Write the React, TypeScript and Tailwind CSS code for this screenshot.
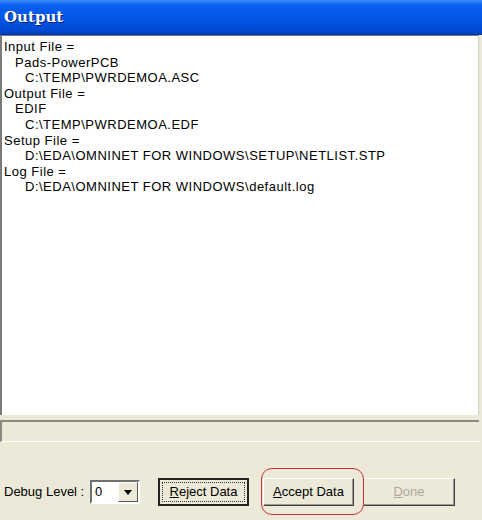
import React from "react";

const lines: { text: string; indent: number }[] = [
  { text: "Input File =", indent: 0 },
  { text: "Pads-PowerPCB", indent: 1 },
  { text: "C:\\TEMP\\PWRDEMOA.ASC", indent: 2 },
  { text: "Output File =", indent: 0 },
  { text: "EDIF", indent: 1 },
  { text: "C:\\TEMP\\PWRDEMOA.EDF", indent: 2 },
  { text: "Setup File =", indent: 0 },
  { text: "D:\\EDA\\OMNINET FOR WINDOWS\\SETUP\\NETLIST.STP", indent: 2 },
  { text: "Log File =", indent: 0 },
  { text: "D:\\EDA\\OMNINET FOR WINDOWS\\default.log", indent: 2 },
];

const indentClass = ["pl-[2px]", "pl-[13px]", "pl-[23px]"];

const raised =
  "bg-[#ece9d8] border border-t-white border-l-white border-b-[#404040] border-r-[#404040] shadow-[inset_-1px_-1px_0_#9a9a90]";

export default function App() {
  return (
    <div
      className="w-[482px] h-[520px] bg-[#ece9d8] flex flex-col overflow-hidden"
      style={{ fontFamily: '"Liberation Sans", Arial, sans-serif' }}
    >
      {/* Title bar */}
      <div className="shrink-0 h-[35px] flex items-center pl-[4px] bg-[linear-gradient(to_bottom,#3a8cf8_0%,#0a5ff0_15%,#0055e5_55%,#0048cf_90%,#003aa8_100%)]">
        <span
          className="text-white font-bold text-[15px] [text-shadow:1px_1px_0_#0a1f70]"
          style={{ fontFamily: '"DejaVu Serif", "Liberation Serif", serif' }}
        >
          Output
        </span>
      </div>

      {/* Output text area */}
      <div className="shrink-0 h-[380px] bg-white border-l-2 border-t border-[#7a7a7a] border-r border-r-[#d4d0c8] mr-[3px] pt-[3px] text-[13px] leading-[15.6px] tracking-[0.5px] text-black">
        {lines.map((l, i) => (
          <div key={i} className={indentClass[l.indent]}>
            {l.text}
          </div>
        ))}
      </div>

      {/* Status panel */}
      <div className="shrink-0 mt-[5px] h-[22px] border-t-2 border-l-2 border-[#8a8a80] border-b border-b-white mr-[3px]" />

      {/* Bottom controls */}
      <div className="shrink-0 flex items-center h-[28px] mt-[36px] text-[13px] text-black">
        <span className="pl-[4px] w-[90px]">Debug Level :</span>
        <div className="w-[50px] h-[24px] bg-white border-2 border-t-[#6f6f6f] border-l-[#6f6f6f] border-b-white border-r-white flex items-center">
          <span className="pl-[3px] flex-1">0</span>
          <div className="w-[20px] h-[20px] bg-[#ece9d8] border border-t-white border-l-white border-b-[#555] border-r-[#555] flex items-center justify-center">
            <svg width="8" height="5" viewBox="0 0 8 5">
              <polygon points="0,0 8,0 4,5" fill="#000" />
            </svg>
          </div>
        </div>

        <button className="ml-[18px] w-[91px] h-[28px] border-2 border-[#222] bg-[#ece9d8] flex items-center justify-center p-[2px]">
          <span className="w-full h-full border border-dotted border-[#333] flex items-center justify-center">
            <span>
              <u>R</u>eject Data
            </span>
          </span>
        </button>

        <div className="relative ml-[14px]">
          <button className={`w-[91px] h-[28px] ${raised}`}>
            <u>A</u>ccept Data
          </button>
          <div className="absolute left-[-2px] top-[-10px] w-[103px] h-[47px] rounded-[11px] border border-[#d0303c] pointer-events-none" />
        </div>

        <button className={`ml-[9px] w-[92px] h-[28px] ${raised} text-[#aca899]`}>
          <u>D</u>one
        </button>
      </div>
    </div>
  );
}
